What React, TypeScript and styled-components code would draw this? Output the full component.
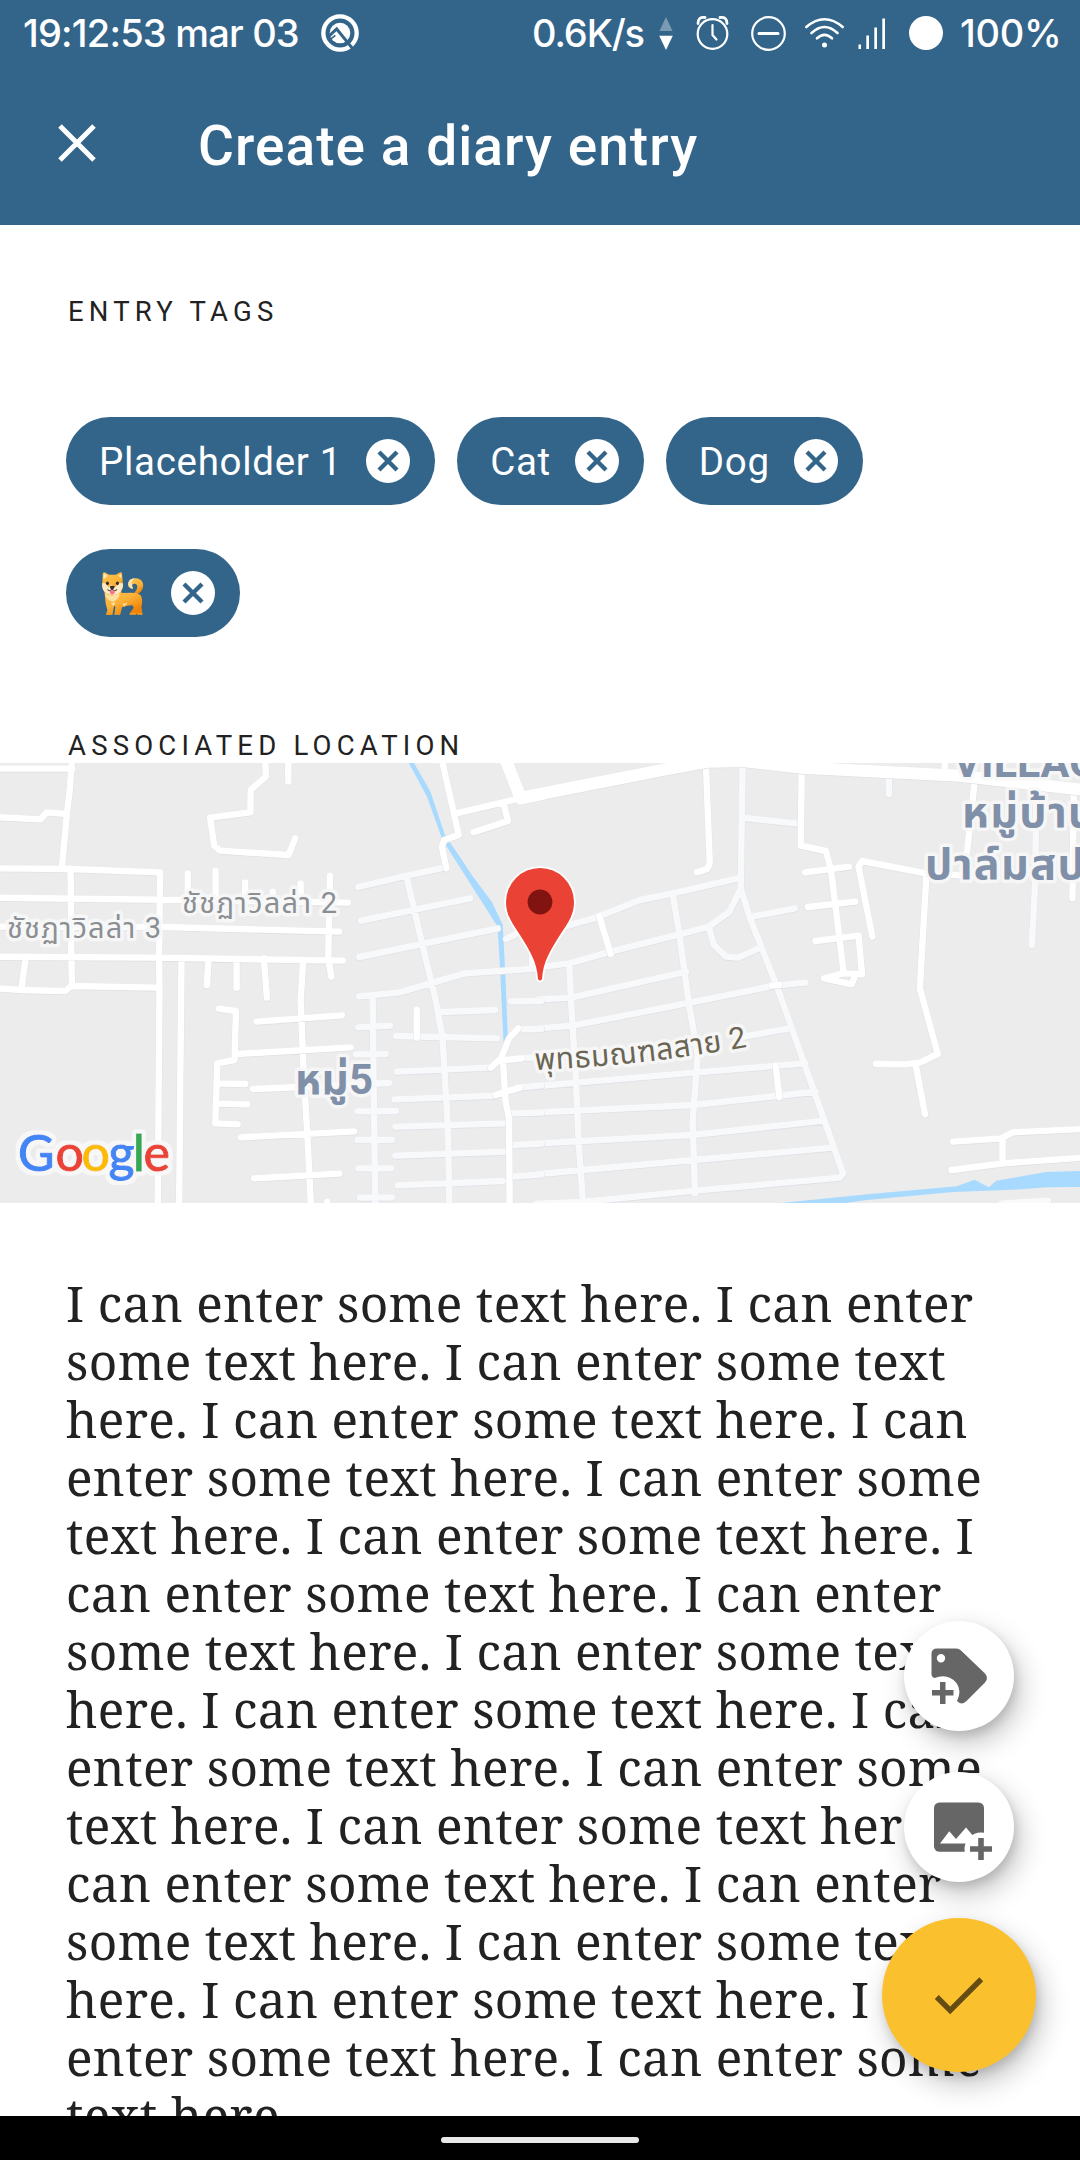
import React from "react";
import styled, { createGlobalStyle } from "styled-components";

const BLUE = "#33658a";

const GlobalStyle = createGlobalStyle`
  html, body { margin: 0; background: #fff; }
  * { box-sizing: border-box; }
`;

const Screen = styled.div`
  position: relative;
  display: flex;
  flex-direction: column;
  width: 1080px;
  height: 2160px;
  overflow: hidden;
  background: #fff;
  color: #222;
  font-family: Roboto, "Noto Sans", sans-serif;
`;

const StatusBar = styled.header`
  display: flex;
  align-items: center;
  justify-content: space-between;
  flex: none;
  height: 66px;
  padding: 0 20px 0 23px;
  background: ${BLUE};
  color: #fff;
`;

const StatusGroup = styled.div`
  display: flex;
  align-items: center;
`;

const StatusText = styled.span<{ $width: number; $spacing?: number; $gap?: number }>`
  width: ${(p) => p.$width}px;
  margin-left: ${(p) => p.$gap ?? 0}px;
  font: 500 38px/66px Inter, "Noto Sans", sans-serif;
  letter-spacing: ${(p) => p.$spacing ?? -0.8}px;
  white-space: nowrap;
`;

const StatusIcon = styled.svg<{ $gap: number }>`
  display: block;
  flex: none;
  margin-left: ${(p) => p.$gap}px;
  overflow: visible;
`;

const AppBar = styled.div`
  display: flex;
  align-items: center;
  flex: none;
  gap: 102px;
  height: 159px;
  padding: 0 58px 0;
  background: ${BLUE};
  color: #fff;
`;

const IconButton = styled.button`
  display: flex;
  padding: 0 0 5px;
  border: 0;
  background: none;
  color: inherit;
`;

const Title = styled.h1`
  margin: 0;
  font-size: 55px;
  font-weight: 500;
  line-height: 64px;
  letter-spacing: 1.05px;
  white-space: nowrap;
`;

const Content = styled.main`
  display: flex;
  flex-direction: column;
  flex: 1;
  min-height: 0;
  overflow: hidden;
`;

const Overline = styled.h2`
  flex: none;
  margin: 0 66px 0 68px;
  font-size: 27.5px;
  font-weight: 400;
  line-height: 32px;
  letter-spacing: 5.2px;
  text-transform: uppercase;
`;

const TagSection = styled.section`
  display: flex;
  flex-direction: column;
  flex: none;
  gap: 89px;
  height: 505px;
  padding-top: 71px;
`;

const ChipList = styled.div`
  display: flex;
  flex-wrap: wrap;
  gap: 44px 22px;
  padding: 0 66px;
`;

const Chip = styled.div`
  display: flex;
  align-items: center;
  gap: 24px;
  height: 88px;
  padding: 0 25px 0 33px;
  border-radius: 44px;
  background: ${BLUE};
  color: #fff;
  font-size: 38.5px;
  letter-spacing: 0.7px;
`;

const EmojiIcon = styled.svg`
  display: block;
  margin: 0 3px;
`;

const LocationSection = styled.section`
  display: flex;
  flex-direction: column;
  flex: none;
`;

const MapFrame = styled.div`
  height: 440px;
  margin-top: 1px;
  overflow: hidden;
  background: #ececec;
`;

const Entry = styled.p`
  flex: none;
  margin: 0;
  padding: 71px 66px 0;
  font: 400 49.5px/58px "Noto Serif", "Liberation Serif", serif;
  letter-spacing: 0.37px;
`;

const Line = styled.span`
  display: block;
  white-space: nowrap;
`;

const FabStack = styled.div`
  position: absolute;
  right: 44px;
  bottom: 88px;
  display: flex;
  flex-direction: column;
  align-items: center;
`;

const Fab = styled.button<{ $primary?: boolean; $space?: number }>`
  display: flex;
  align-items: center;
  justify-content: center;
  width: ${(p) => (p.$primary ? 154 : 110)}px;
  height: ${(p) => (p.$primary ? 154 : 110)}px;
  margin: 0 0 ${(p) => p.$space ?? 0}px;
  padding: 0;
  border: 0;
  border-radius: 50%;
  background: ${(p) => (p.$primary ? "#fbc02d" : "#fff")};
  box-shadow: 6px 12px 28px rgba(0, 0, 0, 0.24), 2px 5px 10px rgba(0, 0, 0, 0.12);
`;

const NavBar = styled.footer`
  display: flex;
  align-items: center;
  justify-content: center;
  flex: none;
  height: 44px;
  padding-top: 4px;
  background: #000;
`;

const Handle = styled.div`
  width: 198px;
  height: 6px;
  border-radius: 3px;
  background: #e8e8e8;
`;

const RemoveIcon = () => (
  <svg width="44" height="44" viewBox="0 0 44 44">
    <circle cx="22" cy="22" r="22" fill="#fff" />
    <path d="M13 13 31 31M31 13 13 31" stroke={BLUE} strokeWidth="4.3" />
  </svg>
);

const Shiba = () => (
  <EmojiIcon width="41.5" height="43" viewBox="33 4 124 129" role="img" aria-label="Shiba dog">
    <defs>
      <linearGradient id="fur" x1="0" y1="0" x2=".6" y2="1">
        <stop offset="0" stopColor="#ffc54f" />
        <stop offset=".6" stopColor="#fbb23a" />
        <stop offset="1" stopColor="#ee8204" />
      </linearGradient>
    </defs>
    <path d="M130 74C150 68 160 52 155 36C150 20 125 18 114 31C106 42 113 56 126 54C119 47 123 38 131 39C142 40 142 56 126 70Z" fill="url(#fur)" />
    <path d="M114 48C107 33 118 21 133 23C124 27 119 36 126 54Q118 54 114 48Z" fill="#fbe3b0" />
    <path d="M40 62 44 100 49 118 45 132H64L69 105 73 108 70 131H88L93 110Q110 104 124 104L128 111 116 128V131H154L151 108Q156 92 150 75Q142 66 120 66L92 67 86 42Z" fill="url(#fur)" />
    <path d="M35 9Q37 3 43 6L54 12H74L87 5Q92 4 93 9L95 35Q98 48 91 59Q80 74 64 74Q46 74 38 60Q32 48 34 34Z" fill="url(#fur)" />
    <path d="M37 16 39 8 49 15 38 26ZM82 15 90 9 91 23Z" fill="#fbe8c2" />
    <path d="M34 38Q46 34 51 50L62 42 72 50Q82 34 95 38Q98 51 90 61Q81 73 65 73Q45 73 37 59Q31 48 34 38Z" fill="#fdeac3" />
    <path d="M41 67Q61 82 86 67Q85 87 66 93Q46 91 41 67Z" fill="#fbdf9f" />
    <path d="M59 97 73 94 68 107ZM94 99 110 96 99 108Z" fill="#fbdf9f" />
    <ellipse cx="49" cy="38" rx="4.5" ry="5.5" fill="#302b2c" />
    <ellipse cx="79" cy="38" rx="4.5" ry="5.5" fill="#302b2c" />
    <path d="M56 47Q63 43 71 47Q71 54 63 57Q56 54 56 47Z" fill="#302b2c" />
    <path d="M49 57Q56 64 63 56Q71 64 78 57" fill="none" stroke="#302b2c" strokeWidth="3" />
    <path d="M56 61Q63 57 71 61V66Q63 78 57 67Z" fill="#f47386" />
    <path d="M46 127H64V132H45ZM71 127H87V132H70ZM117 127H134V132H115ZM140 127H154V132H138Z" fill="#f39a23" />
  </EmojiIcon>
);

const leftPale = [
  "M1040 396 1180 362 1290 338",
  "M1180 362 1215 520 1265 735 1285 850 1300 1110 1305 1343",
  "M1048 497 1365 430",
  "M1043 606 1445 520",
  "M1043 724 1160 712 1350 655 1568 640",
  "M1082 720 1085 1000 1090 1360",
  "M1040 817 1132 812", "M1033 898 1120 897", "M1000 990 1130 984", "M1038 1069 1150 1068",
  "M1038 1155 1138 1155", "M1040 1240 1136 1240", "M1045 1328 1138 1327",
  "M1280 771 1438 765", "M1150 843 1443 850", "M1152 950 1430 937", "M1145 1033 1440 1022",
  "M1148 1115 1470 1105", "M1148 1202 1470 1190", "M1155 1291 1460 1278",
  "M1510 823 1572 822", "M1483 739 1572 738", "M1470 552 1510 530", "M1480 1075 1572 1073",
  "M1490 1170 1572 1166", "M1490 1265 1572 1258", "M1500 910 1572 906", "M1500 998 1572 991",
  "M1545 600 1545 635",
];

const leftWhite = [
  "M-10 41 210 41", "M209 10 203 100 194 178 180 335",
  "M-10 186 118 193 135 172 195 177",
  "M-10 340 205 342 465 352 462 600 463 700 458 1360",
  "M205 340 207 600 209 690 190 708 62 705 -10 700",
  "M75 605 62 705", "M209 693 460 698",
  "M-10 428 530 435 1010 443", "M-10 515 480 516 985 530", "M-10 605 463 608 995 617",
  "M527 610 520 1360",
  "M545 355V420", "M626 348V420", "M712 382V430", "M792 410V440", "M873 385V430",
  "M958 362 953 610 962 665",
  "M605 620 601 690", "M687 620 687 698", "M766 610 775 728",
  "M770 10 772 65 728 105 727 172 610 188 622 272 640 287 838 300 857 250",
  "M837 10V80",
  "M880 620 873 735 880 920 893 1150 903 1360",
  "M636 761 685 768 681 915 631 925 625 1105 690 1108",
  "M745 800 993 781", "M685 897 1018 877", "M630 985 712 987", "M630 1046 718 1048",
  "M735 1002 1000 990", "M700 1147 1028 1129", "M738 1270 985 1256", "M950 1340V1360",
  "M1280 0 1332 240 1290 255 1283 275 1296 340",
  "M1325 175 1510 130", "M1462 145 1475 198 1375 232",
  "M1210 765V848",
  "M1505 820 1478 850 1455 910 1425 938", "M1460 910 1468 1040 1478 1090 1480 1360",
  "M1455 916 1515 910", "M1440 1020 1470 1010 1510 998",
];

const rightPale = [
  "M1013 60V118", "M1442 90 1437 400 1428 570",
  "M588 30 583 400 610 490 690 700 880 1255 870 1268 450 1307 130 1340 -10 1346",
  "M588 188 750 206",
  "M583 368 385 415 290 435 165 487 70 515",
  "M385 415 405 540 432 745 458 900 443 1100 450 1315",
  "M583 400 550 470 490 515 405 538 205 590 85 625 10 635",
  "M490 515 505 570 540 605 575 608 640 578",
  "M615 485 740 460",
  "M85 625 90 735 105 990 112 1160 125 1343",
  "M-5 733 90 728 425 650", "M-5 820 95 812 435 743 680 692 770 683",
  "M-5 993 105 983 455 952 770 925", "M-5 1072 445 1050 800 1010",
  "M-5 1165 440 1140 825 1097", "M-5 1257 445 1215 850 1178",
  "M590 845 725 820", "M1340 1345 1475 1337",
];

const rightWhite = [
  "M482 35 493 325 485 342 455 352",
  "M760 40 757 272 830 288 845 345 882 655",
  "M770 352 897 335", "M778 456 915 440",
  "M800 558 925 542 935 658 880 655 825 670 905 688 912 670",
  "M1235 362 1120 355 935 318 925 335 965 545",
  "M1122 360 1103 700 1155 897 1105 922 1060 928 975 927",
  "M1090 925 1118 1078", "M1262 80 1240 290", "M1175 10V45", "M1550 110 1546 430",
  "M172 483 205 597", "M684 932 695 1026", "M672 692 695 690",
  "M1200 1160 1340 1150 1372 1132 1575 1122", "M1343 1150V1225",
  "M1195 1245 1345 1225 1575 1208",
];

const Roads = ({ paths, color, width = 6.4 }: { paths: string[]; color: string; width?: number }) => {
  const d = paths.join("");
  const common = { fill: "none", strokeLinecap: "round", strokeLinejoin: "round" } as const;
  return (
    <g {...common}>
      <path d={d} stroke="#e0e1e7" strokeWidth={width + 0.8} vectorEffect="non-scaling-stroke" transform="translate(0 1.2)" />
      <path d={d} stroke={color} strokeWidth={width} vectorEffect="non-scaling-stroke" />
    </g>
  );
};

const MapLabel = styled.text<{ $color: string; $size: number; $bold?: boolean; $spacing?: number }>`
  fill: ${(p) => p.$color};
  font-family: Roboto, "Noto Sans Thai", "Noto Sans", sans-serif;
  font-size: ${(p) => p.$size}px;
  font-weight: ${(p) => (p.$bold ? 700 : 400)};
  letter-spacing: ${(p) => p.$spacing ?? 0}px;
  paint-order: stroke;
  stroke: rgba(248, 248, 249, 0.9);
  stroke-width: 7px;
  stroke-linejoin: round;
`;

const LogoText = styled.text`
  font: 400 50px Lato, sans-serif;
`;

const LogoLetter = styled.tspan<{ $color: string }>`
  fill: ${(p) => p.$color};
  stroke: ${(p) => p.$color};
  stroke-width: 1.1px;
`;

const logo: [string, number, string][] = [
  ["G", 18, "#4285f4"], ["o", 55.5, "#ea4335"], ["o", 81.5, "#fbbc05"],
  ["g", 108.5, "#4285f4"], ["l", 133, "#34a853"], ["e", 143.5, "#ea4335"],
];

const LocationMap = () => (
  <MapFrame>
    <svg width="1080" height="440" viewBox="0 0 1080 440">
      <defs>
        <path id="street" d="M535 307Q640 303 752 283" />
        <filter id="halo" x="-10%" y="-20%" width="120%" height="140%">
          <feMorphology in="SourceAlpha" operator="dilate" radius="3" />
          <feGaussianBlur stdDeviation="1.6" result="spread" />
          <feComponentTransfer in="spread" result="edge">
            <feFuncA type="linear" slope="4" intercept="-0.4" />
          </feComponentTransfer>
          <feFlood floodColor="#f7f7f7" />
          <feComposite in2="edge" operator="in" result="rim" />
          <feMerge>
            <feMergeNode in="rim" />
            <feMergeNode in="SourceGraphic" />
          </feMerge>
        </filter>
      </defs>
      <g transform="scale(.34439 .33333) translate(0 -24)">
        <path d="M1185 20 1240 125 1285 255 1445 515 1452 640 1462 860H1475L1467 650 1460 510 1428 440 1370 360 1335 305 1292 240 1250 110 1200 20Z" fill="#a8daff" />
      </g>
      <g transform="translate(540 0) scale(.34439 .33333) translate(0 -24)">
        <path d="M690 1345 950 1318 1210 1294 1262 1274 1303 1297 1325 1277 1470 1251 1570 1248V1296L1470 1297 1400 1303 1200 1311 950 1335 880 1345Z" fill="#a8daff" />
        <Roads paths={rightPale} color="#f8f9fb" />
        <Roads paths={rightWhite} color="#fff" />
        <Roads paths={["M-54 128 0 117 380 40 490 20 590 18 760 38 1220 62 1580 105"]} color="#fff" width={12} />
      </g>
      <g transform="scale(.34439 .33333) translate(0 -24)">
        <Roads paths={leftPale} color="#f8f9fb" />
        <Roads paths={leftWhite} color="#fff" />
        <path d="M1465 5 1512 130 1580 116" fill="none" stroke="#fff" strokeWidth="12" strokeLinejoin="round" vectorEffect="non-scaling-stroke" />
      </g>
      <MapLabel x="182" y="150" $size={29} $color="#8b8f93" textLength="155">ชัชฏาวิลล่า 2</MapLabel>
      <MapLabel x="7" y="175" $size={29} $color="#8b8f93" textLength="154">ชัชฏาวิลล่า 3</MapLabel>
      <MapLabel x="295" y="331" $size={42} $bold $color="#7f90a8" textLength="78">หมู่5</MapLabel>
      <MapLabel x="953" y="14" $size={43} $bold $color="#7f90a8">VILLAGE</MapLabel>
      <MapLabel x="962" y="64" $size={43} $bold $color="#7f90a8" $spacing={1.4}>หมู่บ้าน</MapLabel>
      <MapLabel x="925" y="116" $size={43} $bold $color="#7f90a8" $spacing={1.4}>ปาล์มสปริง</MapLabel>
      <MapLabel $size={30} $color="#6b6554">
        <textPath href="#street" textLength="214">พุทธมณฑลสาย 2</textPath>
      </MapLabel>
      <LogoText y="407.5" filter="url(#halo)">
        {logo.map(([letter, x, color], i) => (
          <LogoLetter key={i} x={x} $color={color}>{letter}</LogoLetter>
        ))}
      </LogoText>
      <path d="M506 139A34 34 0 0 1 574 139C574 151 569 159 560 172C550 188 543 199 542 216Q540 219 538 216C537 199 530 188 520 172C511 159 506 151 506 139Z" fill="#ea4335" stroke="#fff" strokeWidth="3.5" paintOrder="stroke" />
      <circle cx="540" cy="139" r="12.4" fill="#811411" />
    </svg>
  </MapFrame>
);

const lines = [
  "I can enter some text here. I can enter",
  "some text here. I can enter some text",
  "here. I can enter some text here. I can",
  "enter some text here. I can enter some",
  "text here. I can enter some text here. I",
  "can enter some text here. I can enter",
  "some text here. I can enter some text",
  "here. I can enter some text here. I can",
  "enter some text here. I can enter some",
  "text here. I can enter some text here. I",
  "can enter some text here. I can enter",
  "some text here. I can enter some text",
  "here. I can enter some text here. I can",
  "enter some text here. I can enter some",
  "text here.",
];

const tags: { id: string; label: React.ReactNode }[] = [
  { id: "placeholder", label: "Placeholder 1" },
  { id: "cat", label: "Cat" },
  { id: "dog", label: "Dog" },
  { id: "shiba", label: <Shiba /> },
];

export default function App() {
  return (
    <Screen>
      <GlobalStyle />
      <StatusBar>
        <StatusGroup>
          <StatusText $width={277}>19:12:53 mar 03</StatusText>
          <StatusIcon $gap={21} width="38" height="38" viewBox="33 26 114 114">
            <circle cx="90" cy="83" r="50" fill="none" stroke="#fff" strokeWidth="13" />
            <circle cx="90" cy="83" r="31" fill="#fff" />
            <path d="M56 93 80 71 128 130" fill="none" stroke={BLUE} strokeWidth="9" />
            <path d="M60 103 76 90" fill="none" stroke={BLUE} strokeWidth="5" />
          </StatusIcon>
        </StatusGroup>
        <StatusGroup>
          <StatusText $width={113} $spacing={-1.1}>0.6K/s</StatusText>
          <StatusIcon $gap={14} width="14" height="33" viewBox="0 0 14 33">
            <path d="M7 0 13.5 14H.5Z" fill="#fff" opacity=".35" />
            <path d="M7 33 13.8 18.7H.2Z" fill="#fff" />
          </StatusIcon>
          <StatusIcon $gap={23} width="33" height="34" viewBox="0 0 33 34" fill="none" stroke="#fff" strokeWidth="2.2" strokeLinecap="round">
            <circle cx="16.5" cy="18" r="14.8" />
            <path d="M16.5 9V19L20.5 23.5" />
            <path d="M2 7.5Q2 .5 9 1.5M31 7.5Q31 .5 24 1.5" strokeWidth="2.8" />
          </StatusIcon>
          <StatusIcon $gap={22} width="35" height="35" viewBox="0 0 35 35" fill="none" stroke="#fff" strokeWidth="2.2">
            <circle cx="17.5" cy="17.5" r="16.3" />
            <path d="M8 17.5H27" strokeWidth="3" strokeLinecap="round" />
          </StatusIcon>
          <StatusIcon $gap={19} width="39" height="31" viewBox="0 0 39 31" fill="none" stroke="#fff" strokeWidth="2.6" strokeLinecap="round">
            <path d="M1.3 9Q19.5-6.5 37.7 9M6.5 15Q19.5 3 32.5 15M12 20.3Q19.5 13.5 27 20.3" />
            <circle cx="19.5" cy="27" r="2.5" fill="#fff" stroke="none" />
          </StatusIcon>
          <StatusIcon $gap={14} width="28" height="31" viewBox="0 0 28 31" fill="#fff">
            <path d="M.5 26.5H3V31H.5ZM8.3 17.5H11V31H8.3ZM16.3 9.5H19V31H16.3ZM24.3.5H27V31H24.3Z" />
          </StatusIcon>
          <StatusIcon $gap={23} width="34" height="34" viewBox="0 0 34 34">
            <circle cx="17" cy="17" r="17" fill="#fff" />
          </StatusIcon>
          <StatusText $gap={17} $width={100} $spacing={-0.3}>100%</StatusText>
        </StatusGroup>
      </StatusBar>

      <AppBar>
        <IconButton aria-label="Close">
          <svg width="38" height="38" viewBox="0 0 38 38">
            <path d="M2 2 36 36M36 2 2 36" stroke="#fff" strokeWidth="5" />
          </svg>
        </IconButton>
        <Title>Create a diary entry</Title>
      </AppBar>

      <Content>
        <TagSection>
          <Overline>Entry tags</Overline>
          <ChipList>
            {tags.map((tag) => (
              <Chip key={tag.id}>
                {tag.label}
                <RemoveIcon />
              </Chip>
            ))}
          </ChipList>
        </TagSection>
        <LocationSection>
          <Overline>Associated location</Overline>
          <LocationMap />
        </LocationSection>
        <Entry>
          {lines.map((line, i) => (
            <Line key={i}>{line}</Line>
          ))}
        </Entry>
      </Content>

      <NavBar>
        <Handle />
      </NavBar>

      <FabStack>
        <Fab $space={41} aria-label="Add tag">
          <svg width="110" height="110" viewBox="0 0 110 110" fill="#666">
            <path fillRule="evenodd" d="M33 27.5H52Q55 27.5 57 29.5L81 52.5Q85 57.5 81 61.5L62 80.5Q57 84.5 53 80Q58 70 52.5 62Q44 52 30.5 57Q27.5 56 27.5 53V33Q27.5 27.5 33 27.5ZM37 33A4.2 4.2 0 1 0 37 41.4A4.2 4.2 0 1 0 37 33Z" />
            <path d="M36 61H41.5V69H49.5V74.5H41.5V83H36V74.5H28V69H36Z" />
          </svg>
        </Fab>
        <Fab $space={36} aria-label="Add image">
          <svg width="110" height="110" viewBox="0 0 110 110">
            <rect x="30" y="30.4" width="50" height="49.4" rx="5.5" fill="#666" />
            <path d="M36 71.5 45.3 59.3 52 67 62 55.4 70 65 66 71.5Z" fill="#fff" />
            <circle cx="77" cy="77" r="16.5" fill="#fff" />
            <path d="M74.2 66H79.8V74.2H88V79.8H79.8V88H74.2V79.8H66V74.2H74.2Z" fill="#666" />
          </svg>
        </Fab>
        <Fab $primary aria-label="Save">
          <svg width="66" height="66" viewBox="0.2 0 24 24" fill="#644c12">
            <path d="M9 16.17 4.83 12 3.41 13.41 9 19 21 7 19.59 5.59Z" />
          </svg>
        </Fab>
      </FabStack>
    </Screen>
  );
}
